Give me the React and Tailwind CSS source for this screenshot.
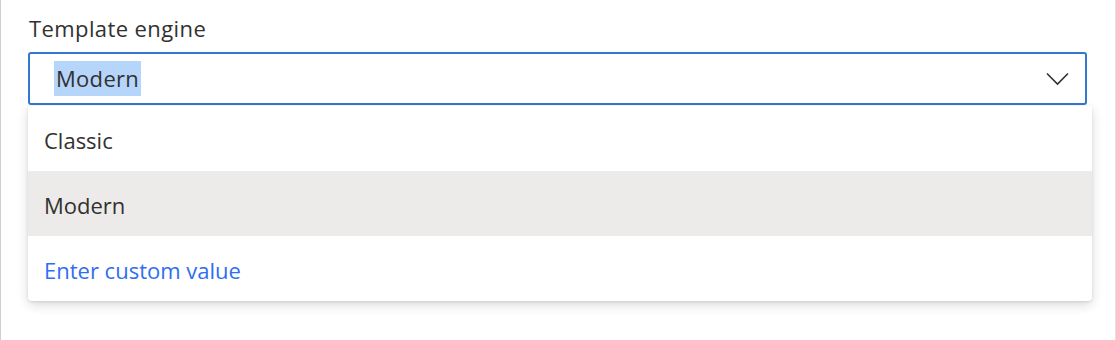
import { useState } from "react";

const options = ["Classic", "Modern"];

const App = () => {
  const [selected] = useState("Modern");

  return (
    <div
      className="w-[1116px] h-[340px] bg-white border-l border-r border-l-[#cfcfcf] border-r-[#e1e1e1] relative text-[#323130]"
      style={{ fontFamily: '"Segoe UI", "Open Sans", "Noto Sans", sans-serif' }}
    >
      <div className="pl-[27px] pt-[12px] w-[1087px]">
        <label className="block text-[22px] leading-[32px] pl-[1px] mb-[8px] tracking-[0.4px]">Template engine</label>

        {/* Combo box */}
        <div className="h-[53px] w-[1059px] border-2 border-[#3278d0] rounded-[3px] flex items-center pl-[24px] pr-[16px]">
          <span className="bg-[#b6d5fb] text-[22px] leading-[35px] px-[2px] tracking-[0.3px]">{selected}</span>
          <svg className="ml-auto" width="23" height="14" viewBox="0 0 23 14" fill="none">
            <path d="M1 1.5 L11.5 12 L22 1.5" stroke="#323130" strokeWidth="1.6" />
          </svg>
        </div>
      </div>

      {/* Dropdown */}
      <div className="absolute left-[27px] top-[106px] w-[1064px] bg-white rounded-b-[4px] shadow-[0_4px_12px_rgba(0,0,0,0.14),0_1px_3px_rgba(0,0,0,0.1)] overflow-hidden">
        {options.map((opt) => (
          <div
            key={opt}
            className={`h-[65px] flex items-center pl-[16px] pt-[3px] text-[22px] ${opt === selected ? "bg-[#edebe9]" : ""}`}
          >
            {opt}
          </div>
        ))}
        <div className="h-[65px] flex items-center pl-[16px] pt-[3px] text-[22px] text-[#2f6ef0]">Enter custom value</div>
      </div>
    </div>
  );
};

export default App;
